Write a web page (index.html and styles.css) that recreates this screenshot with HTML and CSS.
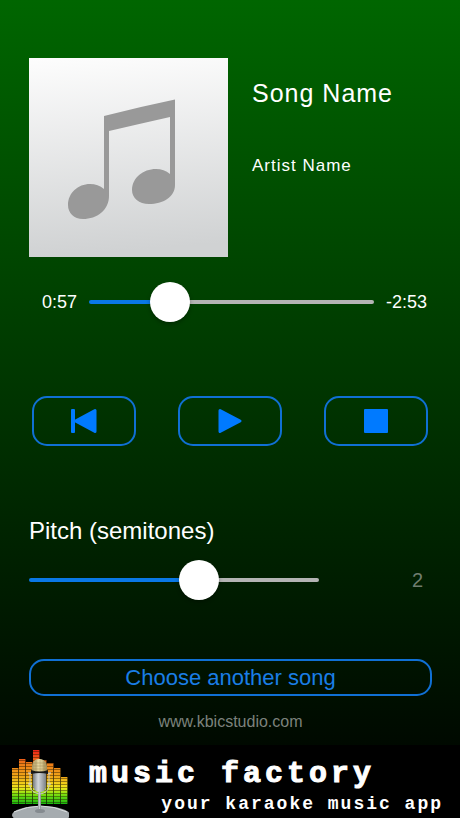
FILE: index.html
```html
<!DOCTYPE html>
<html lang="en">
<head>
<meta charset="utf-8">
<meta name="viewport" content="width=device-width, initial-scale=1">
<title>Music Factory</title>
<link rel="stylesheet" href="styles.css">
</head>
<body>
<main class="player">
  <header class="track">
    <svg class="cover" viewBox="0 0 199 199" role="img" aria-label="Album cover">
      <defs>
        <linearGradient id="paper" x1="0" y1="0" x2="0.08" y2="1">
          <stop offset="0" stop-color="#fdfdfd"/>
          <stop offset="1" stop-color="#d0d2d3"/>
        </linearGradient>
      </defs>
      <rect width="199" height="199" fill="url(#paper)"/>
      <path fill="#999" d="M75 58Q110 49 146 41.500V127C146 139 134 146 120 146C110 146 103 140 103 132C103 120 114 111 127 111Q135 111 141 116V59Q110 66 80 73V138C80 152 68 161 54 161C45 161 39 155 39 147C39 135 49 126 61 126Q69 126 75 131Z"/>
    </svg>
    <div class="names">
      <h1 class="song">Song Name</h1>
      <p class="artist">Artist Name</p>
    </div>
  </header>

  <section class="scrubber">
    <label class="time" for="position">0:57</label>
    <input class="slider" id="position" type="range" min="0" max="230" value="57" style="--fill: 28%">
    <output class="time" for="position">-2:53</output>
  </section>

  <section class="transport">
    <button class="key" type="button" aria-label="Back to start">
      <svg class="glyph" viewBox="0 0 26 26"><rect x="0" y="1" width="4" height="24" rx="1"/><path d="M4.500 13L24 2.500V23.500Z" stroke-width="3" stroke-linejoin="round"/></svg>
    </button>
    <button class="key" type="button" aria-label="Play">
      <svg class="glyph" viewBox="0 0 26 26"><path d="M3 2.500L23 13L3 23.500Z" stroke-width="3" stroke-linejoin="round"/></svg>
    </button>
    <button class="key" type="button" aria-label="Stop">
      <svg class="glyph" viewBox="0 0 26 26"><rect x="1" y="1" width="24" height="24" rx="1"/></svg>
    </button>
  </section>

  <section class="pitch">
    <label class="pitch-label" for="pitch">Pitch (semitones)</label>
    <input class="slider" id="pitch" type="range" min="-10" max="10" value="2" style="--fill: 59%">
    <output class="pitch-value" for="pitch">2</output>
  </section>

  <button class="choose" type="button">Choose another song</button>
  <a class="site" href="#">www.kbicstudio.com</a>
</main>

<footer class="banner">
  <svg class="logo" viewBox="0 0 60 70" aria-hidden="true">
    <defs>
      <linearGradient id="level" gradientUnits="userSpaceOnUse" x1="0" y1="2" x2="0" y2="56">
        <stop offset="0" stop-color="#f02018"/>
        <stop offset="0.25" stop-color="#ed7a18"/>
        <stop offset="0.5" stop-color="#f0a818"/>
        <stop offset="0.7" stop-color="#f2e81c"/>
        <stop offset="0.82" stop-color="#7ee010"/>
        <stop offset="1" stop-color="#18b810"/>
      </linearGradient>
      <linearGradient id="steel">
        <stop offset="0" stop-color="#777d82"/>
        <stop offset="0.4" stop-color="#d3d7db"/>
        <stop offset="1" stop-color="#7b8187"/>
      </linearGradient>
      <linearGradient id="grille">
        <stop offset="0" stop-color="#ad9a61"/>
        <stop offset="0.5" stop-color="#eee0a8"/>
        <stop offset="1" stop-color="#a18b52"/>
      </linearGradient>
      <pattern id="rows" width="60" height="3" patternUnits="userSpaceOnUse">
        <rect width="60" height="1" fill="#2a1a00" opacity="0.45"/>
      </pattern>
      <path id="bars" d="M3 20h6.400v36h-6.400zM10 11h6.400v45h-6.400zM17 14h6.400v42h-6.400zM24 2h6.400v54h-6.400zM31 12h6.400v44h-6.400zM38 15h6.400v41h-6.400zM45 20h6.400v36h-6.400zM52 29h6.400v27h-6.400z"/>
    </defs>
    <use href="#bars" fill="url(#level)"/>
    <use href="#bars" fill="url(#rows)"/>
    <ellipse cx="32" cy="67" rx="29" ry="9" fill="#a5abaf"/>
    <path d="M5 64Q32 52 58 64" fill="none" stroke="#d9dddf"/>
    <path d="M29 44h3v18h-3z" fill="url(#steel)"/>
    <ellipse cx="31" cy="63" rx="5" ry="2" fill="#858b90"/>
    <path d="M21 25V38Q22 45 31 46Q39 45 40 38V25" fill="none" stroke="#c7cbbf"/>
    <path d="M19 25h4M38 25h4M19 36h4M38 36h4" stroke="#ddd"/>
    <path d="M24 24h13v14q0 6-6 6t-7-6z" fill="url(#steel)"/>
    <path d="M23 24V18Q24 11 30 11Q37 11 38 18V24Z" fill="url(#grille)"/>
    <path d="M24 15h13M23 18h15M23 21h15M27 12v11M31 12v12M35 13v10" stroke="#9c8954" stroke-width="0.500"/>
    <path d="M22 22Q31 25 39 22V26Q31 24 22 26Z" fill="#181818"/>
  </svg>
  <div class="brand">
    <p class="brand-name">music factory</p>
    <p class="brand-tag">your karaoke music app</p>
  </div>
</footer>
</body>
</html>
```
FILE: styles.css
```css
* {
  box-sizing: border-box;
}

html {
  background: #000;
}

body {
  margin: 0;
  min-height: 100vh;
  display: flex;
  flex-direction: column;
  background: linear-gradient(#006600, #000);
  color: #fff;
  font-family: "Liberation Sans", Arial, sans-serif;
}

h1,
p {
  margin: 0;
  font-weight: 400;
}

.player {
  flex: 1;
  display: flex;
  flex-direction: column;
  padding: 58px 28px 13px 29px;
}

.track {
  display: flex;
  gap: 24px;
}

.cover {
  display: block;
  flex: none;
  width: 199px;
  height: 199px;
}

.names {
  display: flex;
  flex-direction: column;
  gap: 48px;
  padding-top: 20px;
}

.song {
  font-size: 25px;
  line-height: 30px;
  letter-spacing: 1px;
}

.artist {
  font-size: 17px;
  line-height: 20px;
  letter-spacing: 1px;
}

.scrubber {
  display: flex;
  align-items: center;
  gap: 12px;
  margin-top: 25px;
  padding: 0 5px 0 13px;
}

.time {
  font-size: 18px;
  line-height: 20px;
}

.slider {
  appearance: none;
  flex: 1;
  min-width: 0;
  width: 100%;
  height: 40px;
  margin: 0;
  background: none;
}

.slider::-webkit-slider-runnable-track {
  height: 4px;
  border-radius: 2px;
  background: linear-gradient(to right, #0a78e6 var(--fill), #b4b4b4 var(--fill));
}

.slider::-webkit-slider-thumb {
  appearance: none;
  width: 40px;
  height: 40px;
  margin-top: -18px;
  border-radius: 50%;
  background: #fff;
  box-shadow: 0 2px 4px rgba(0, 0, 0, 0.3);
}

.transport {
  display: flex;
  justify-content: space-between;
  margin-top: 74px;
  padding: 0 4px 0 3px;
}

.key,
.choose {
  border: 2px solid #1070d4;
  border-radius: 15px;
  background: none;
  color: #1a7ee6;
  font: inherit;
}

.key {
  display: grid;
  place-items: center;
  width: 104px;
  height: 50px;
  padding: 0;
}

.glyph {
  width: 26px;
  height: 26px;
  fill: #007aff;
  stroke: #007aff;
  stroke-width: 0;
}

.pitch {
  display: grid;
  grid-template-columns: 290fr 113fr;
  align-items: center;
  row-gap: 14px;
  margin-top: 70px;
}

.pitch-label {
  grid-column: 1 / -1;
  font-size: 24px;
  line-height: 30px;
}

.pitch-value {
  padding-right: 9px;
  color: #6f7d6f;
  font-size: 20px;
  line-height: 24px;
  text-align: right;
}

.choose {
  height: 37px;
  margin-top: 59px;
  padding: 0;
  font-size: 22px;
  line-height: 30px;
}

.site {
  align-self: center;
  margin-top: 16px;
  color: #7c827c;
  font-size: 16px;
  line-height: 20px;
  text-decoration: none;
}

.banner {
  display: flex;
  align-items: flex-start;
  gap: 20px;
  height: 73px;
  padding: 3px 17px 0 9px;
  overflow: hidden;
  background: #000;
}

.logo {
  flex: none;
  width: 60px;
  height: 70px;
}

.brand {
  flex: 1;
  padding-top: 8px;
  font-family: "Liberation Mono", "Courier New", monospace;
  white-space: nowrap;
}

.brand-name,
.brand-tag {
  font-weight: 700;
}

.brand-name {
  font-size: 30px;
  line-height: 36px;
  letter-spacing: 4px;
  -webkit-text-stroke: 1px #fff;
}

.brand-tag {
  font-size: 18px;
  line-height: 24px;
  letter-spacing: 2px;
  text-align: right;
}
```
